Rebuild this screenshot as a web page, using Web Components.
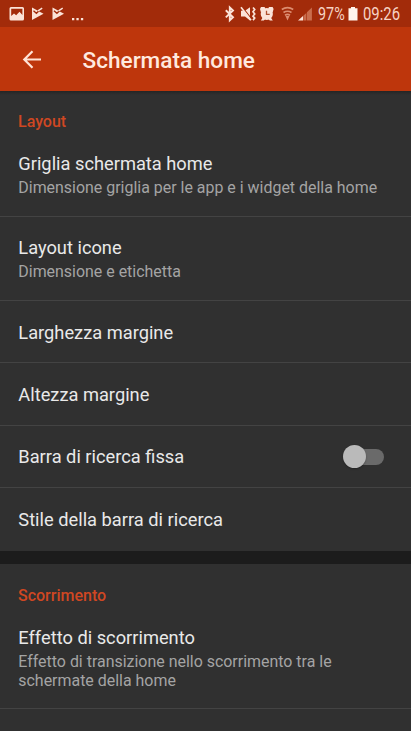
<!DOCTYPE html>
<html lang="it">
<head>
<meta charset="utf-8">
<title>Schermata home</title>
<style>
html, body { margin: 0; height: 100%; background: #303030; overflow: hidden; }
body { font-family: Roboto, "Liberation Sans", sans-serif; color: #e8e8e8; }
</style>
</head>
<body>
<settings-screen></settings-screen>
<script>
const define = (name, html, setup) => {
  const template = document.createElement('template');
  template.innerHTML = html;
  customElements.define(name, class extends HTMLElement {
    constructor() {
      super();
      this.attachShadow({ mode: 'open' }).append(template.content.cloneNode(true));
    }
    connectedCallback() { if (setup) setup(this, this.shadowRoot); }
  });
};

define('status-bar', `
<style>
:host { display: flex; align-items: center; justify-content: space-between; height: 27px; box-sizing: border-box; padding: 1px 11px 0 9px; background: #a22b0a; color: #f6d3c4; }
.group { display: flex; align-items: center; height: 26px; }
svg { display: block; flex: none; }
.cond { display: block; height: 20px; font-size: 17.5px; line-height: 20px; white-space: nowrap; }
.cond span { display: inline-block; transform-origin: 0 50%; }
</style>
<div class="group">
  <svg width="76" height="16" viewBox="9 6 76 16" fill="#fbe3d8">
    <path fill-rule="evenodd" d="M11 7h11.500q1.500 0 1.500 1.500v10.500q0 1.500-1.500 1.500H11q-1.500 0-1.500-1.500V8.500Q9.500 7 11 7zM11.200 8.800v7.200l2.800-2.600 2.200 1.800 3.300-3.400 2.900 3.200V8.800z"/>
    <path d="M32 7.500l11.500 6.200L32 20z"/>
    <path d="M52.500 7.500l11.500 6.200-11.500 6.300z"/>
    <path d="M33.500 10.800l2.900 2.500 5-4.800M54 10.800l2.900 2.500 5-4.800" fill="none" stroke="#a22b0a" stroke-width="1.300"/>
    <path d="M38 10.800l4.200-2.600M58.500 10.800l4.200-2.600" fill="none" stroke="#fbe3d8" stroke-width="1.500"/>
    <path d="M72 18h2.300v2.300H72zM76.400 18h2.300v2.300h-2.300zM80.900 18h2.300v2.300h-2.300z"/>
  </svg>
</div>
<div class="group">
  <svg width="94" height="18" viewBox="224 5 94 18" fill="#fbe3d8">
    <path d="M225.800 10.200l7.200 7-3.200 3V7.500l3.200 3-7.200 6.900" fill="none" stroke="#fbe3d8" stroke-width="1.900"/>
    <path d="M241 10.800h4l5-3.600v13.200l-5-3.800h-4z"/>
    <path d="M242.300 7.200l9 11.500" stroke="#a22b0a" stroke-width="1.200"/>
    <path d="M241 7.200l10 13" stroke="#fbe3d8" stroke-width="1.700"/>
    <path d="M253 7.500l1.700 2-1.700 2.200 1.700 2.200-1.700 2.200 1.700 2-1.700 2" fill="none" stroke="#fbe3d8" stroke-width="1.700"/>
    <circle cx="266.800" cy="14" r="6.100"/>
    <path d="M260 9l1-2h3.500l1 1.500-4.500 4zM273.600 9l-1-2h-3.500l-1 1.500 4.500 4zM260.800 20.500l2-3 2.500 1.500-1.500 1.500zM272.800 20.500l-2-3-2.500 1.500 1.500 1.500z"/>
    <path d="M266.500 10.800v3.600h3.200" fill="none" stroke="#b0502f" stroke-width="1.300"/>
    <g fill="none" stroke="#dc8d70" stroke-width="1.700">
      <path d="M281.800 9.500q5.700-3.600 11.400 0M283.500 12.500q4-2.500 8 0M285 15.200q2.500-1.500 5 0"/>
    </g>
    <path d="M285.500 16h4l-2 4.500z" fill="#dc8d70"/>
    <path d="M298 20.500l5-4.500v4.500z" fill="#fbe3d8"/>
    <path d="M303.300 15.800l3-2.900v7.600h-3zM306.900 12.300l5-4.800v13h-5z" fill="#c96d4d"/>
  </svg>
  <span class="cond" style="width:29px"><span style="transform:scaleX(.82)">97%</span></span>
  <svg width="16" height="18" viewBox="347 5 16 18"><path d="M351 7h4v1.300h2.500V20.500h-9V8.300h2.500z" fill="#fff4ec"/></svg>
  <span class="cond" style="width:37px"><span style="transform:scaleX(.85)">09:26</span></span>
</div>`);

define('app-bar', `
<style>
:host { display: flex; align-items: center; height: 64px; box-sizing: border-box; padding: 2px 0 0 22px; background: #be360c; color: #ffe9df; }
svg { display: block; width: 20px; height: 20px; margin-right: 40.500px; }
h1 { margin: 2px 0 0; font-size: 22.600px; line-height: 28px; font-weight: 500; white-space: nowrap; }
</style>
<svg viewBox="0 0 20 20" fill="none" stroke="#ffe3d6" stroke-width="2.200"><path d="M19 9.500H2.500M10.500 1.300L2.300 9.500l8.200 8.200"/></svg>
<h1><slot></slot></h1>`);

define('settings-section', `
<style>
:host { display: block; background: #303030; }
h2 { margin: 0; height: 47px; box-sizing: border-box; padding: var(--heading-top, 21px) 18px 0; font-size: 16px; line-height: 20px; font-weight: 500; color: #cf4722; }
</style>
<h2></h2><slot></slot>`, (host, root) => { root.querySelector('h2').textContent = host.getAttribute('heading'); });

define('settings-row', `
<style>
:host { display: flex; align-items: center; justify-content: space-between; box-sizing: border-box; height: var(--row-height, 62.400px); padding: var(--nudge, 2px) 27px 0 18.300px; border-bottom: 1px solid #434343; }
:host([last]) { border-bottom: 0; }
.title { font-size: 18.270px; line-height: 24px; color: #e9e9e9; white-space: nowrap; }
.sub { font-size: 15.940px; line-height: 19px; color: #a4a4a4; padding-top: 2px; }
.sub:empty { display: none; }
</style>
<div><div class="title"><slot></slot></div><div class="sub"></div></div>
<slot name="control"></slot>`, (host, root) => {
  root.querySelector('.sub').textContent = host.getAttribute('summary') || '';
});

define('toggle-switch', `
<style>
:host { display: flex; align-items: center; width: 41px; height: 24px; margin-top: -1px; }
.track { width: 39px; height: 16px; margin-left: 2px; border-radius: 8px; background: #6a6a6a; display: flex; align-items: center; }
.thumb { flex: none; width: 23px; height: 23px; margin-left: -2px; border-radius: 50%; background: #bababa; box-shadow: 0 1px 2px #0004; }
</style>
<div class="track"><div class="thumb"></div></div>`);

define('settings-screen', `
<style>
:host { display: flex; flex-direction: column; width: 411px; height: 731px; overflow: hidden; background: #1c1c1c; }
main { flex: 1; min-height: 0; overflow: hidden; display: flex; flex-direction: column; gap: 13px; }
settings-section { flex: none; }
.first { background: linear-gradient(#252525, #303030 4px); }
.second { --heading-top: 22px; }
.lead { --row-height: 79px; padding-bottom: 8px; }
.two { --row-height: 84px; --nudge: 0; }
.three { --row-height: 98.500px; padding-bottom: 5px; }
.tail { height: 40px; background: #303030; }
</style>
<status-bar></status-bar>
<app-bar>Schermata home</app-bar>
<main>
  <settings-section class="first" heading="Layout">
    <settings-row class="lead" summary="Dimensione griglia per le app e i widget della home">Griglia schermata home</settings-row>
    <settings-row class="two" summary="Dimensione e etichetta">Layout icone</settings-row>
    <settings-row>Larghezza margine</settings-row>
    <settings-row>Altezza margine</settings-row>
    <settings-row>Barra di ricerca fissa<toggle-switch slot="control"></toggle-switch></settings-row>
    <settings-row last>Stile della barra di ricerca</settings-row>
  </settings-section>
  <settings-section class="second" heading="Scorrimento">
    <settings-row class="three" summary="Effetto di transizione nello scorrimento tra le schermate della home">Effetto di scorrimento</settings-row>
    <div class="tail"></div>
  </settings-section>
</main>`);
</script>
</body>
</html>
